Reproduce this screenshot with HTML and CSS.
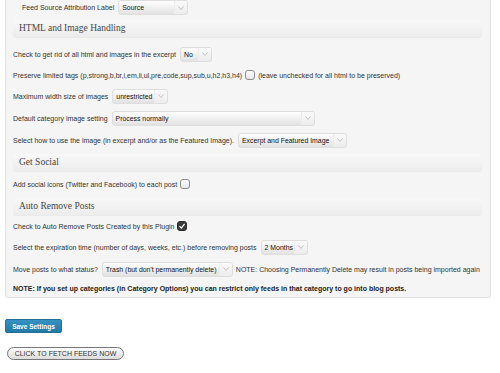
FILE: index.html
```html
<!DOCTYPE html>
<html>
<head>
<meta charset="utf-8">
<link rel="stylesheet" href="styles.css">
</head>
<body>
<div class="panel">
  <div class="row first">
    <span class="lbl">Feed Source Attribution Label</span>
    <span class="sel w70"><span class="txt">Source</span><span class="arr"><svg width="6" height="4" viewBox="0 0 6 4"><path d="M0.5 0.5 L3 3.5 L5.5 0.5" fill="none" stroke="#b5b5b5" stroke-width="0.8"/></svg></span></span>
  </div>

  <div class="hdr wide">HTML and Image Handling</div>
  <div class="row s">
    <span class="lbl">Check to get rid of all html and images in the excerpt</span>
    <span class="sel w32"><span class="txt">No</span><span class="arr"><svg width="6" height="4" viewBox="0 0 6 4"><path d="M0.5 0.5 L3 3.5 L5.5 0.5" fill="none" stroke="#b5b5b5" stroke-width="0.8"/></svg></span></span>
  </div>
  <div class="row c">
    <span class="lbl">Preserve limited tags (p,strong,b,br,i,em,li,ul,pre,code,sup,sub,u,h2,h3,h4)</span>
    <span class="cb"></span>
    <span class="lbl">(leave unchecked for all html to be preserved)</span>
  </div>
  <div class="row s">
    <span class="lbl">Maximum width size of images</span>
    <span class="sel w56"><span class="txt">unrestricted</span><span class="arr"><svg width="6" height="4" viewBox="0 0 6 4"><path d="M0.5 0.5 L3 3.5 L5.5 0.5" fill="none" stroke="#b5b5b5" stroke-width="0.8"/></svg></span></span>
  </div>
  <div class="row s">
    <span class="lbl">Default category image setting</span>
    <span class="sel w203"><span class="txt">Process normally</span><span class="arr"><svg width="6" height="4" viewBox="0 0 6 4"><path d="M0.5 0.5 L3 3.5 L5.5 0.5" fill="none" stroke="#b5b5b5" stroke-width="0.8"/></svg></span></span>
  </div>
  <div class="row s">
    <span class="lbl">Select how to use the image (in excerpt and/or as the Featured Image).</span>
    <span class="sel w109"><span class="txt">Excerpt and Featured Image</span><span class="arr"><svg width="6" height="4" viewBox="0 0 6 4"><path d="M0.5 0.5 L3 3.5 L5.5 0.5" fill="none" stroke="#b5b5b5" stroke-width="0.8"/></svg></span></span>
  </div>

  <div class="hdr">Get Social</div>
  <div class="row s">
    <span class="lbl">Add social icons (Twitter and Facebook) to each post</span>
    <span class="cb"></span>
  </div>

  <div class="hdr tight">Auto Remove Posts</div>
  <div class="row c">
    <span class="lbl">Check to Auto Remove Posts Created by this Plugin</span>
    <span class="cb on"><svg width="8" height="8" viewBox="0 0 8 8"><path d="M1.5 4.2 L3.3 6 L6.6 1.8" fill="none" stroke="#fff" stroke-width="1.2"/></svg></span>
  </div>
  <div class="row s">
    <span class="lbl">Select the expiration time (number of days, weeks, etc.) before removing posts</span>
    <span class="sel w47"><span class="txt">2 Months</span><span class="arr"><svg width="6" height="4" viewBox="0 0 6 4"><path d="M0.5 0.5 L3 3.5 L5.5 0.5" fill="none" stroke="#b5b5b5" stroke-width="0.8"/></svg></span></span>
  </div>
  <div class="row s">
    <span class="lbl">Move posts to what status?</span>
    <span class="sel w131"><span class="txt">Trash (but don't permanently delete)</span><span class="arr"><svg width="6" height="4" viewBox="0 0 6 4"><path d="M0.5 0.5 L3 3.5 L5.5 0.5" fill="none" stroke="#b5b5b5" stroke-width="0.8"/></svg></span></span>
    <span class="lbl">NOTE: Choosing Permanently Delete may result in posts being imported again</span>
  </div>
  <div class="row n">
    <span class="lbl strong">NOTE: If you set up categories (in Category Options) you can restrict only feeds in that category to go into blog posts.</span>
  </div>
</div>

<div class="actions">
  <button class="save">Save Settings</button>
  <button class="fetch">CLICK TO FETCH FEEDS NOW</button>
</div>
</body>
</html>
```

FILE: styles.css
```css
html, body {
  margin: 0;
  padding: 0;
  background: #fff;
}
body {
  font-family: "Liberation Sans", Arial, sans-serif;
  font-size: 7px;
  color: #333;
}
.panel {
  margin-left: 5px;
  width: 486px;
  background: #f5f5f5;
  border: 1px solid #e2e2e2;
  border-top: none;
  border-radius: 0 0 3px 3px;
  padding: 0 7px 1px 7px;
  box-sizing: border-box;
}
.row {
  display: flex;
  align-items: center;
  gap: 3px;
  white-space: nowrap;
}
.row.first {
  height: 15px;
  padding-left: 9px;
  margin-bottom: 5px;
}
.row.s { height: 22px; }
.row.c { height: 20px; }
.row.n { height: 16px; }
.lbl { color: #333; }
.strong { font-weight: bold; color: #222; }
.hdr {
  margin: 3px 1px 2px 0;
  height: 17px;
  line-height: 17px;
  padding-left: 6px;
  font-family: "Liberation Serif", "Times New Roman", serif;
  font-size: 9.5px;
  color: #464646;
  background: linear-gradient(#f8f8f8, #ececec);
  border-radius: 3px;
  box-shadow: 0 1px 1px rgba(0, 0, 0, 0.05);
}
.hdr.wide { margin-bottom: 6px; }
.hdr.tight { margin-bottom: 1px; }
.sel {
  display: inline-flex;
  align-items: stretch;
  height: 15px;
  box-sizing: border-box;
  border: 1px solid #dedede;
  border-radius: 3px;
  background: linear-gradient(#fefefe, #e2e2e2);
  margin-left: 1px;
}
.sel .txt {
  flex: 1;
  padding-left: 3px;
  line-height: 13px;
  color: #111;
  font-size: 6.9px;
  overflow: hidden;
}
.sel .arr {
  width: 12px;
  flex: none;
  display: flex;
  align-items: center;
  justify-content: center;
  border-left: 1px solid #ececec;
  background: linear-gradient(#fafafa, #ececec);
  border-radius: 0 3px 3px 0;
}
.w70 { width: 70px; }
.w32 { width: 32px; }
.w56 { width: 56px; }
.w203 { width: 203px; }
.w109 { width: 109px; }
.w47 { width: 47px; }
.w131 { width: 131px; }
.cb {
  display: inline-flex;
  align-items: center;
  justify-content: center;
  width: 10px;
  height: 10px;
  box-sizing: border-box;
  border: 1px solid #8c8c8c;
  border-radius: 3px;
  background: linear-gradient(#fff, #e6e6e6);
}
.cb.on {
  background: #3a3a3a;
  border-color: #2a2a2a;
}
.actions {
  padding: 21px 0 0 5px;
  display: flex;
  flex-direction: column;
  align-items: flex-start;
  gap: 14px;
}
.save {
  width: 57px;
  height: 14px;
  padding: 0;
  border: 1px solid #1f6f96;
  border-radius: 2px;
  background: linear-gradient(#3592c2, #227aa6);
  color: #fff;
  font-family: "Liberation Sans", Arial, sans-serif;
  font-size: 6.5px;
  font-weight: bold;
}
.fetch {
  margin-left: 2px;
  width: 117px;
  height: 13px;
  padding: 0;
  border: 1px solid #777;
  border-radius: 7px;
  background: linear-gradient(#fdfdfd, #dcdcdc);
  color: #333;
  font-family: "Liberation Sans", Arial, sans-serif;
  font-size: 7px;
}
```
